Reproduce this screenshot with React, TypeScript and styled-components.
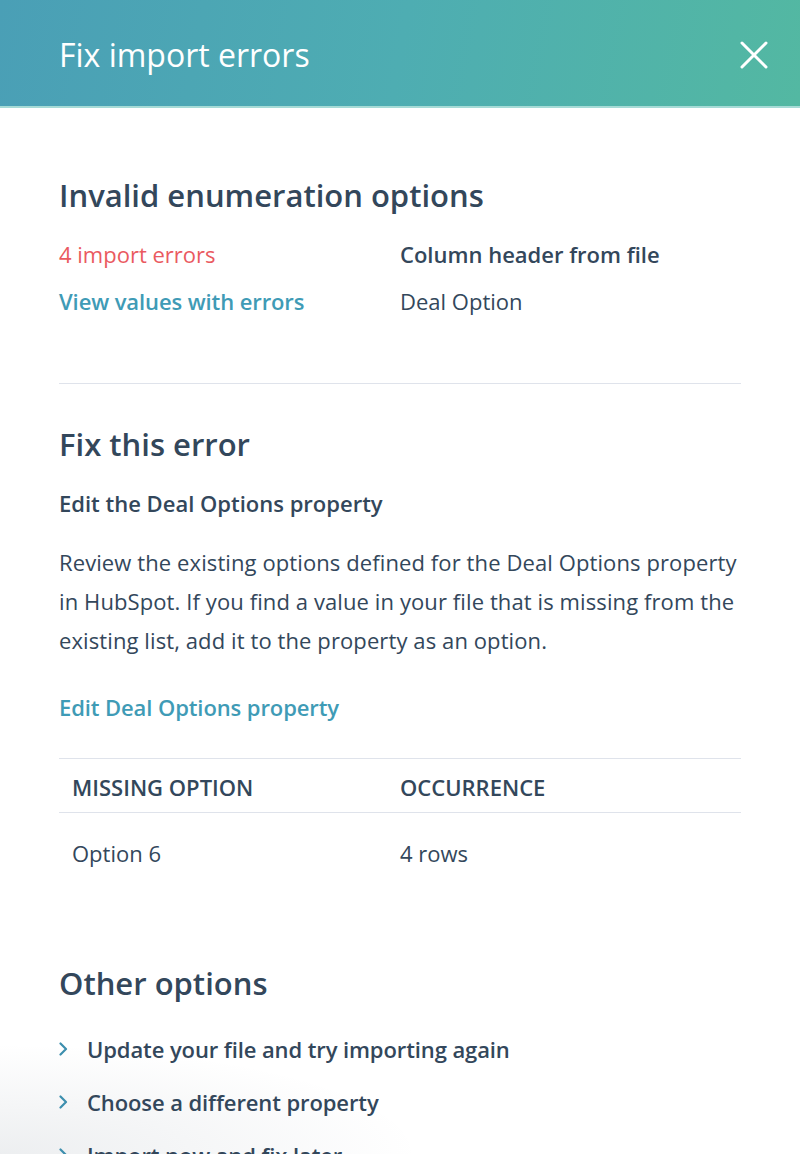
import React from "react";
import styled, { createGlobalStyle } from "styled-components";

const COLORS = {
  TEXT: "#33475b",
  LINK: "#3f9bb6",
  ERROR: "#ea5a5f",
  BORDER: "#dfe3eb",
};

const GlobalStyle = createGlobalStyle`
  html, body {
    margin: 0;
    padding: 0;
    background: #ffffff;
  }
  body {
    font-family: "Open Sans", "Lato", sans-serif;
    color: ${COLORS.TEXT};
    -webkit-font-smoothing: antialiased;
  }
`;

const Panel = styled.div`
  width: 800px;
  height: 1154px;
  overflow: hidden;
  background: radial-gradient(
      ellipse 420px 110px at 0 100%,
      rgba(51, 71, 91, 0.09),
      rgba(51, 71, 91, 0) 100%
    ),
    #ffffff;
`;

const Header = styled.header`
  height: 108px;
  border-bottom: 2px solid #a6dbd6;
  background: linear-gradient(100deg, #4a9fb6 0%, #4eadb2 50%, #53b8a2 100%);
  display: flex;
  align-items: center;
  justify-content: space-between;
  padding: 3px 32px 0 59px;
  box-sizing: border-box;
`;

const HeaderTitle = styled.h1`
  margin: 0;
  color: #ffffff;
  font-size: 32px;
  font-weight: 500;
  letter-spacing: 0;
`;

const CloseButton = styled.button`
  border: none;
  background: none;
  padding: 0;
  width: 28px;
  height: 28px;
  cursor: pointer;
  display: flex;
  svg {
    width: 28px;
    height: 28px;
  }
`;

const Content = styled.main`
  padding: 67px 59px 0;
  font-size: 22px;
  letter-spacing: 0;
`;

const SectionTitle = styled.h2<{ $gap?: number; $top?: number }>`
  margin: ${(p) => p.$top ?? 0}px 0 ${(p) => p.$gap ?? 16}px;
  font-size: 31px;
  line-height: 40px;
  font-weight: 600;
  letter-spacing: 0;
`;

const MetaGrid = styled.div`
  display: grid;
  grid-template-columns: 341px 1fr;
  line-height: 47px;
`;

const ErrorCount = styled.span`
  color: ${COLORS.ERROR};
  font-weight: 500;
`;

const Label = styled.span`
  font-weight: 600;
`;

const Link = styled.a`
  color: ${COLORS.LINK};
  font-weight: 600;
  letter-spacing: -0.1px;
  text-decoration: none;
  cursor: pointer;
`;

const Divider = styled.hr`
  border: none;
  border-top: 1px solid ${COLORS.BORDER};
  margin: 58px 0 40px;
`;

const SubTitle = styled.h3`
  margin: 25px 0 0;
  font-size: 22px;
  line-height: 28px;
  font-weight: 600;
`;

const Paragraph = styled.p`
  margin: 26px 0 0;
  line-height: 39px;
  font-weight: 400;
  letter-spacing: 0.1px;
`;

const LinkLine = styled.div`
  margin-top: 33px;
  line-height: 28px;
`;

const Table = styled.div`
  margin-top: 37px;
  border-top: 1px solid ${COLORS.BORDER};
`;

const TableRow = styled.div<{ $head?: boolean }>`
  display: grid;
  grid-template-columns: 328px 1fr;
  height: ${(p) => (p.$head ? 54 : 80)}px;
  padding-top: ${(p) => (p.$head ? 3 : 0)}px;
  box-sizing: border-box;
  align-items: center;
  border-bottom: ${(p) => (p.$head ? `1px solid ${COLORS.BORDER}` : "none")};
  font-weight: ${(p) => (p.$head ? 600 : 400)};
  text-transform: ${(p) => (p.$head ? "uppercase" : "none")};
`;

const Cell = styled.div`
  padding-left: 13px;
`;

const OptionList = styled.ul`
  list-style: none;
  margin: 19px 0 0;
  padding: 0;
`;

const OptionItem = styled.li`
  display: flex;
  align-items: center;
  height: 53px;
  font-weight: 600;
  letter-spacing: -0.1px;
  gap: 19px;
  svg {
    width: 9px;
    height: 14px;
    flex-shrink: 0;
  }
`;

const Chevron = () => (
  <svg viewBox="0 0 9 14" fill="none">
    <path
      d="M1.5 1.5L7 7l-5.5 5.5"
      stroke="#3d8fae"
      strokeWidth="2.2"
      strokeLinecap="round"
      strokeLinejoin="round"
    />
  </svg>
);

const otherOptions = [
  "Update your file and try importing again",
  "Choose a different property",
  "Import now and fix later",
];

function App() {
  return (
    <>
      <GlobalStyle />
      <Panel>
        <Header>
          <HeaderTitle>Fix import errors</HeaderTitle>
          <CloseButton aria-label="Close">
            <svg viewBox="0 0 28 28" fill="none">
              <path
                d="M2 2l24 24M26 2L2 26"
                stroke="#ffffff"
                strokeWidth="3"
                strokeLinecap="round"
              />
            </svg>
          </CloseButton>
        </Header>

        <Content>
          <SectionTitle>Invalid enumeration options</SectionTitle>
          <MetaGrid>
            <ErrorCount>4 import errors</ErrorCount>
            <Label>Column header from file</Label>
            <div>
              <Link>View values with errors</Link>
            </div>
            <span>Deal Option</span>
          </MetaGrid>

          <Divider />

          <SectionTitle $gap={0}>Fix this error</SectionTitle>
          <SubTitle>Edit the Deal Options property</SubTitle>
          <Paragraph>
            Review the existing options defined for the Deal Options property
            in HubSpot. If you find a value in your file that is missing from
            the existing list, add it to the property as an option.
          </Paragraph>
          <LinkLine>
            <Link>Edit Deal Options property</Link>
          </LinkLine>

          <Table>
            <TableRow $head>
              <Cell>Missing option</Cell>
              <Cell>Occurrence</Cell>
            </TableRow>
            <TableRow>
              <Cell>Option 6</Cell>
              <Cell>4 rows</Cell>
            </TableRow>
          </Table>

          <SectionTitle $gap={0} $top={70}>
            Other options
          </SectionTitle>
          <OptionList>
            {otherOptions.map((label) => (
              <OptionItem key={label}>
                <Chevron />
                {label}
              </OptionItem>
            ))}
          </OptionList>
        </Content>
      </Panel>
    </>
  );
}

export default App;
